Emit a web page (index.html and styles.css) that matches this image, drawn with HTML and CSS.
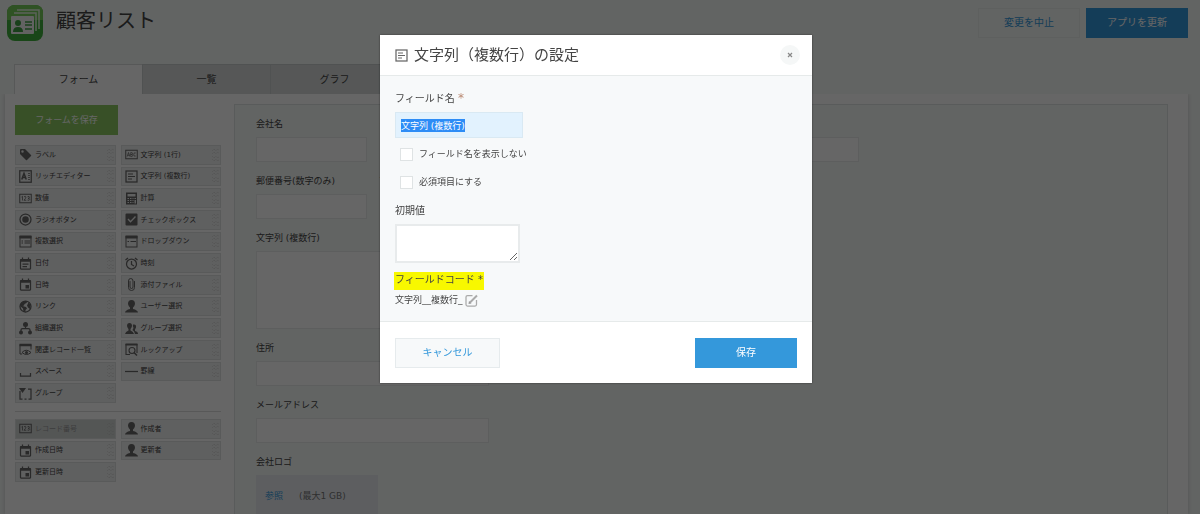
FILE: index.html
```html
<!DOCTYPE html>
<html lang="ja">
<head>
<meta charset="utf-8">
<title>顧客リスト</title>
<link rel="stylesheet" href="styles.css">
</head>
<body>
<svg class="sprite" aria-hidden="true">
  <symbol id="i-tag" viewBox="0 0 26 26"><path fill="currentColor" fill-rule="evenodd" d="M2 4Q2 2 4 2H12L24 14Q25 15 24 16L16 24Q15 25 14 24L2 12ZM7 4.500A2.500 2.500 0 1 0 7 9.500A2.500 2.500 0 1 0 7 4.500Z"/></symbol>
  <symbol id="i-rich" viewBox="0 0 26 26"><g fill="none" stroke="currentColor"><rect x="1.500" y="1.500" width="23" height="23" stroke-width="2.500"/><path stroke-width="3" d="M5.500 19 10 7l4.500 12M7 15h6"/><path stroke-width="1.500" d="M18 7h4M18 11h4M18 15h4M18 19h4"/></g></symbol>
  <symbol id="i-num" viewBox="0 0 26 26"><g fill="none" stroke="currentColor"><rect x="1.500" y="4.500" width="23" height="17" stroke-width="2"/><path stroke-width="1.600" d="M5 10l2-1.500V17M10 9.500q3.500-2 4 .500 0 2-4 6.500h4.500M17 9.500q4-2 4 1 0 2-3 2.200 3.500 0 3.500 2-.500 3-4.500 1.300"/></g></symbol>
  <symbol id="i-abc" viewBox="0 0 26 26"><g fill="none" stroke="currentColor"><rect x="1.500" y="4.500" width="23" height="17" stroke-width="2"/><path stroke-width="1.500" d="M4.500 17 7 9l2.500 8M5.500 14.500h3M11.500 9v8h2q2-.300 2-2.200 0-1.800-2-1.800h-2 1.500q2-.200 2-2T13 9ZM21.500 10q-4-2-4 3t4 3"/></g></symbol>
  <symbol id="i-multi" viewBox="0 0 26 26"><g fill="none" stroke="currentColor"><rect x="2" y="2" width="22" height="22" stroke-width="2.500"/><path stroke-width="2" d="M6 8h10M6 13h14M6 18h8"/></g></symbol>
  <symbol id="i-calc" viewBox="0 0 26 26"><path fill="currentColor" fill-rule="evenodd" d="M2 1H24V25H2ZM5 4V9H21V4ZM5 12V14H8V12ZM10 12V14H13V12ZM15 12V14H17V12ZM19 12V14H22V12ZM5 16V18H8V16ZM10 16V18H13V16ZM15 16V18H17V16ZM19 16V23H22V16ZM5 20V22H8V20ZM10 20V22H13V20ZM15 20V22H17V20Z"/></symbol>
  <symbol id="i-radio" viewBox="0 0 26 26"><circle cx="13" cy="13" r="11" fill="none" stroke="currentColor" stroke-width="2.500"/><circle cx="13" cy="13" r="6.500" fill="currentColor"/></symbol>
  <symbol id="i-check" viewBox="0 0 26 26"><path fill="currentColor" fill-rule="evenodd" d="M3 1H23Q25 1 25 3V23Q25 25 23 25H3Q1 25 1 23V3Q1 1 3 1ZM5 13 11 19.500 22 8 20 6 11 15.500 7 11Z"/></symbol>
  <symbol id="i-list" viewBox="0 0 26 26"><g fill="none" stroke="currentColor" stroke-width="2"><rect x="2" y="3" width="22" height="21"/><path stroke-width="6" d="M1 4h24"/><path d="M5 12h3M11 12h11M5 16h3M11 16h11"/></g></symbol>
  <symbol id="i-drop" viewBox="0 0 26 26"><g fill="none" stroke="currentColor" stroke-width="2"><rect x="2" y="3" width="22" height="21"/><path stroke-width="6" d="M1 4h24"/><path d="M5 13h3M11 13h11"/></g></symbol>
  <symbol id="i-date" viewBox="0 0 26 26"><g fill="none" stroke="currentColor" stroke-width="2.500"><rect x="3" y="5" width="20" height="19" rx="1"/><path stroke-width="5" d="M3 7h20"/><path d="M7 1v5M19 1v5M7 14h12M7 19h9"/></g></symbol>
  <symbol id="i-cal" viewBox="0 0 26 26"><g fill="none" stroke="currentColor" stroke-width="2.500"><rect x="3" y="5" width="20" height="19" rx="1"/><path stroke-width="5" d="M3 7h20"/><path d="M7 1v5M19 1v5"/></g><path fill="currentColor" d="M13 14h7v7h-7z"/></symbol>
  <symbol id="i-clock" viewBox="0 0 26 26"><g fill="none" stroke="currentColor" stroke-width="2.500"><circle cx="13" cy="14" r="10"/><path d="M13 8v7l5 3M1 6l5-4M25 6l-5-4"/></g></symbol>
  <symbol id="i-clip" viewBox="0 0 26 26"><path fill="none" stroke="currentColor" stroke-width="2" stroke-linecap="round" d="M19 7v12q0 6-6 6t-6-6V6q0-5 4.500-5T16 6v12q0 3-3 3t-3-3V7"/></symbol>
  <symbol id="i-link" viewBox="0 0 26 26"><circle cx="13" cy="13" r="11" fill="none" stroke="currentColor" stroke-width="2.500"/><path fill="currentColor" d="M3 8 9 2 17 2 15 6 11 8 10 11 7 12 14 14 16 17 13 20 13 24 9 23 8 17 2 12ZM19 5l4 5-1 8-4-3-2-4Z"/></symbol>
  <symbol id="i-user" viewBox="0 0 26 26"><path fill="currentColor" d="M13 0Q20 0 20 8Q19 13 16 15V18Q25 20 26 25H0Q1 20 10 18V15Q7 13 6 8Q6 0 13 0Z"/></symbol>
  <symbol id="i-org" viewBox="0 0 26 26"><circle cx="13" cy="5" r="5" fill="currentColor"/><circle cx="4" cy="21" r="4" fill="currentColor"/><circle cx="22" cy="21" r="4" fill="currentColor"/><path fill="none" stroke="currentColor" stroke-width="2.500" d="M13 8v5M4 20v-4q0-3 3-3h12q3 0 3 3v4"/></symbol>
  <symbol id="i-group" viewBox="0 0 26 26"><path fill="currentColor" d="M9 2Q14 2 14 8Q13 12 11 14V17Q17 19 18 24H0Q1 19 7 17V14Q5 12 4 8Q4 2 9 2ZM18 5Q23 5 22 11L20 15V18Q26 19 26 24H20Q19 18 15 16L17 12Q15 7 16 5Z"/></symbol>
  <symbol id="i-related" viewBox="0 0 26 26"><g fill="none" stroke="currentColor" stroke-width="2"><path d="M6 22H2V3h22v10"/><path stroke-width="5" d="M1 4h24"/><path d="M6 19q8-9 18 0-9 8-18 0Z"/></g><circle cx="15" cy="19" r="3" fill="currentColor"/></symbol>
  <symbol id="i-lookup" viewBox="0 0 26 26"><g fill="none" stroke="currentColor" stroke-width="2.200"><path d="M10 23H2V3h22v17"/><path stroke-width="4" d="M1 3h24"/><circle cx="14" cy="15" r="6"/><path stroke-width="3" d="m18 19 6 6"/></g></symbol>
  <symbol id="i-space" viewBox="0 0 26 26"><path fill="none" stroke="currentColor" stroke-width="2.500" d="M3 16v6h20v-6"/></symbol>
  <symbol id="i-rule" viewBox="0 0 26 26"><path stroke="currentColor" stroke-width="2.500" d="M0 13h26"/></symbol>
  <symbol id="i-box" viewBox="0 0 26 26"><path fill="none" stroke="currentColor" stroke-width="2.500" d="M2 8v16h5M11 24h4M19 24h5V4h-6"/><path fill="currentColor" d="M0 2h14L7 12z"/></symbol>
  <symbol id="i-grip" viewBox="0 0 14 28"><path fill="none" stroke="currentColor" stroke-width="1.500" stroke-dasharray="2 2" d="m1 5 3-3 3 3M8 5l3-3 3 3M1 11l3-3 3 3M8 11l3-3 3 3M1 17l3 3 3-3M8 17l3 3 3-3M1 23l3 3 3-3M8 23l3 3 3-3"/></symbol>
</svg>

<header class="app-header">
  <svg class="app-icon" viewBox="0 0 38 38" aria-hidden="true">
    <rect x="1" y="1" width="36" height="36" rx="8" fill="#3fae3c"/>
    <path d="M1 16V9q0-8 8-8h20q8 0 8 8v7z" fill="#77cc5a"/>
    <path d="M11 6h22v19M8 9h22v18" fill="none" stroke="#e8f5e4" stroke-width="1.500"/>
    <rect x="5" y="12" width="23" height="18" rx="1" fill="#f5f5f5"/>
    <circle cx="12" cy="19" r="3" fill="#3fa045"/>
    <path d="M7 28q0-5 5-5t5 5z" fill="#3fa045"/>
    <path d="M19 18h7M19 21h7M19 25h7" stroke="#3fa045" stroke-width="1.500"/>
  </svg>
  <h1 class="app-title">顧客リスト</h1>
  <div class="header-actions">
    <button class="button button-plain" type="button">変更を中止</button>
    <button class="button button-primary" type="button">アプリを更新</button>
  </div>
</header>

<nav class="tabs">
  <button class="tab tab-active" type="button">フォーム</button>
  <button class="tab" type="button">一覧</button>
  <button class="tab" type="button">グラフ</button>
</nav>

<main class="panel">
  <aside class="palette">
    <button class="button button-save-form" type="button">フォームを保存</button>
    <div class="parts parts-main">
      <button class="part" type="button"><svg class="icon"><use href="#i-tag"/></svg>ラベル<svg class="grip"><use href="#i-grip"/></svg></button>
      <button class="part" type="button"><svg class="icon"><use href="#i-abc"/></svg>文字列 (1行)<svg class="grip"><use href="#i-grip"/></svg></button>
      <button class="part" type="button"><svg class="icon"><use href="#i-rich"/></svg>リッチエディター<svg class="grip"><use href="#i-grip"/></svg></button>
      <button class="part" type="button"><svg class="icon"><use href="#i-multi"/></svg>文字列 (複数行)<svg class="grip"><use href="#i-grip"/></svg></button>
      <button class="part" type="button"><svg class="icon"><use href="#i-num"/></svg>数値<svg class="grip"><use href="#i-grip"/></svg></button>
      <button class="part" type="button"><svg class="icon"><use href="#i-calc"/></svg>計算<svg class="grip"><use href="#i-grip"/></svg></button>
      <button class="part" type="button"><svg class="icon"><use href="#i-radio"/></svg>ラジオボタン<svg class="grip"><use href="#i-grip"/></svg></button>
      <button class="part" type="button"><svg class="icon"><use href="#i-check"/></svg>チェックボックス<svg class="grip"><use href="#i-grip"/></svg></button>
      <button class="part" type="button"><svg class="icon"><use href="#i-list"/></svg>複数選択<svg class="grip"><use href="#i-grip"/></svg></button>
      <button class="part" type="button"><svg class="icon"><use href="#i-drop"/></svg>ドロップダウン<svg class="grip"><use href="#i-grip"/></svg></button>
      <button class="part" type="button"><svg class="icon"><use href="#i-date"/></svg>日付<svg class="grip"><use href="#i-grip"/></svg></button>
      <button class="part" type="button"><svg class="icon"><use href="#i-clock"/></svg>時刻<svg class="grip"><use href="#i-grip"/></svg></button>
      <button class="part" type="button"><svg class="icon"><use href="#i-cal"/></svg>日時<svg class="grip"><use href="#i-grip"/></svg></button>
      <button class="part" type="button"><svg class="icon"><use href="#i-clip"/></svg>添付ファイル<svg class="grip"><use href="#i-grip"/></svg></button>
      <button class="part" type="button"><svg class="icon"><use href="#i-link"/></svg>リンク<svg class="grip"><use href="#i-grip"/></svg></button>
      <button class="part" type="button"><svg class="icon"><use href="#i-user"/></svg>ユーザー選択<svg class="grip"><use href="#i-grip"/></svg></button>
      <button class="part" type="button"><svg class="icon"><use href="#i-org"/></svg>組織選択<svg class="grip"><use href="#i-grip"/></svg></button>
      <button class="part" type="button"><svg class="icon"><use href="#i-group"/></svg>グループ選択<svg class="grip"><use href="#i-grip"/></svg></button>
      <button class="part" type="button"><svg class="icon"><use href="#i-related"/></svg>関連レコード一覧<svg class="grip"><use href="#i-grip"/></svg></button>
      <button class="part" type="button"><svg class="icon"><use href="#i-lookup"/></svg>ルックアップ<svg class="grip"><use href="#i-grip"/></svg></button>
      <button class="part" type="button"><svg class="icon"><use href="#i-space"/></svg>スペース<svg class="grip"><use href="#i-grip"/></svg></button>
      <button class="part" type="button"><svg class="icon"><use href="#i-rule"/></svg>罫線<svg class="grip"><use href="#i-grip"/></svg></button>
      <button class="part" type="button"><svg class="icon"><use href="#i-box"/></svg>グループ<svg class="grip"><use href="#i-grip"/></svg></button>
    </div>
    <div class="parts parts-system">
      <button class="part part-used" type="button" disabled><svg class="icon"><use href="#i-num"/></svg>レコード番号<svg class="grip"><use href="#i-grip"/></svg></button>
      <button class="part" type="button"><svg class="icon"><use href="#i-user"/></svg>作成者<svg class="grip"><use href="#i-grip"/></svg></button>
      <button class="part" type="button"><svg class="icon"><use href="#i-cal"/></svg>作成日時<svg class="grip"><use href="#i-grip"/></svg></button>
      <button class="part" type="button"><svg class="icon"><use href="#i-user"/></svg>更新者<svg class="grip"><use href="#i-grip"/></svg></button>
      <button class="part" type="button"><svg class="icon"><use href="#i-cal"/></svg>更新日時<svg class="grip"><use href="#i-grip"/></svg></button>
    </div>
  </aside>

  <section class="canvas">
    <div class="field-row">
      <div class="field"><label for="company">会社名</label><input id="company" class="box" type="text"></div>
      <div class="field field-wide"><label for="department">部署名</label><input id="department" class="box" type="text"></div>
      <div class="field field-wide"><label for="person">担当者名</label><input id="person" class="box" type="text"></div>
    </div>
    <div class="field-row">
      <div class="field"><label for="zip">郵便番号(数字のみ)</label><input id="zip" class="box" type="text"></div>
      <div class="field"><label for="tel">TEL</label><input id="tel" class="box" type="text"></div>
    </div>
    <div class="field-row">
      <div class="field field-wide"><label for="memo">文字列 (複数行)</label><textarea id="memo" class="box box-tall"></textarea></div>
    </div>
    <div class="field-row">
      <div class="field field-wide"><label for="address">住所</label><input id="address" class="box" type="text"></div>
    </div>
    <div class="field-row">
      <div class="field field-wide"><label for="mail">メールアドレス</label><input id="mail" class="box" type="text"></div>
    </div>
    <div class="field-row field-row-last">
      <div class="field"><span>会社ロゴ</span><div class="upload"><a href="#logo">参照</a><span class="upload-note">(最大1 GB)</span></div></div>
    </div>
  </section>
</main>

<div class="backdrop">
  <form class="dialog" role="dialog" aria-modal="true" aria-labelledby="dialog-title">
    <header class="dialog-header">
      <svg class="icon"><use href="#i-multi"/></svg>
      <h2 class="dialog-title" id="dialog-title">文字列（複数行）の設定</h2>
      <button class="close" type="button" aria-label="閉じる"><svg class="close-mark" viewBox="0 0 6 6" aria-hidden="true"><path d="m1 1 4 4M5 1 1 5" stroke="#888" stroke-width="1.200"/></svg></button>
    </header>
    <div class="dialog-body">
      <label class="caption" for="field-name">フィールド名 <span class="required">*</span></label>
      <input class="name-input" id="field-name" type="text" value="文字列 (複数行)">
      <label class="option"><input class="tick" type="checkbox">フィールド名を表示しない</label>
      <label class="option"><input class="tick" type="checkbox">必須項目にする</label>
      <label class="caption caption-default" for="default-value">初期値</label>
      <textarea class="default-input" id="default-value"></textarea>
      <div class="code-caption">フィールドコード <span>*</span></div>
      <div class="code-value">文字列__複数行_
        <button class="edit" type="button" aria-label="フィールドコードを編集"><svg class="edit-icon" viewBox="0 0 26 26" aria-hidden="true"><g fill="none" stroke="#aaa" stroke-width="2.500"><path d="M15 3H5Q2 3 2 6v15q0 3 3 3h15q3 0 3-3V12"/><path stroke-width="4" d="M10 17 24 3"/></g><path fill="#999" d="m7 20 1-6 5 5z"/></svg></button>
      </div>
    </div>
    <footer class="dialog-footer">
      <button class="button button-cancel" type="button">キャンセル</button>
      <button class="button button-primary" type="button">保存</button>
    </footer>
  </form>
</div>
<script src="script.js"></script>
</body>
</html>
```
FILE: styles.css
```css
* { box-sizing: border-box; }
body {
  display: flex;
  flex-direction: column;
  margin: 0;
  height: 100vh;
  padding: 0 12px 0 5px;
  overflow: hidden;
  background: #f5f9f7;
  color: #444;
  font: 9px/16px "DejaVu Sans", "Noto Sans CJK JP", sans-serif;
}
button, input, textarea { font: inherit; color: inherit; margin: 0; border-radius: 0; }
.sprite { display: none; }
.icon { flex: none; width: 13px; height: 13px; color: #666; }

.button { height: 30px; border: 0; padding: 0; font-size: 10px; text-align: center; }
.button-plain { width: 102px; background: #f5f9f7; border: 1px solid #ecefee; color: #3498db; }
.button-primary { width: 102px; background: #3498db; border: 1px solid #3498db; color: #fff; }
.button-save-form { width: 103px; background: #8cc963; color: #fff; font-size: 9px; }

.app-header { display: flex; flex: none; height: 64px; align-items: flex-start; padding-left: 1px; }
.app-icon { width: 38px; height: 38px; margin-top: 4px; }
.app-title { margin: 6px 0 0 12px; font-size: 20px; line-height: 30px; font-weight: 400; }
.header-actions { display: flex; gap: 6px; margin: 8px 0 0 auto; }

.tabs { display: flex; flex: none; height: 30px; padding-left: 9px; }
.tab { width: 128px; padding: 0; border: 1px solid #c8cccc; border-width: 1px 0 0 1px; background: #d6dada; font-size: 10px; }
.tab-active { background: #fff; border-color: #d9dddd; }

.panel { display: flex; flex: 1; min-height: 0; background: #fff; box-shadow: 0 0 4px #ccc; clip-path: inset(0 -6px -6px -6px); }
.palette { flex: none; width: 229px; padding: 11px 13px 0 10px; }
.parts { display: grid; grid-template-columns: 1fr 1fr; grid-auto-rows: 1fr; gap: 2px 5px; }
.parts-main { height: 258px; margin-top: 10px; }
.parts-system { height: 71px; margin-top: 8px; padding-top: 7px; border-top: 1px solid #dcdcdc; }
.part {
  display: flex; align-items: center; gap: 3px;
  min-height: 0; padding: 0 1px 0 3px;
  border: 1px solid #dfe1e1; background: #eeefef;
  font-size: 7px; line-height: 10px; white-space: nowrap;
}
.part-used { background: #d2d6d5; color: #999; }
.grip { flex: none; width: 7px; height: 14px; margin-left: auto; color: #bbb; }

.canvas { flex: 1; margin: 10px 20px 0 0; padding: 11px 21px 0; border: 1px solid #dfe3e3; border-bottom: 0; background: #f5f9f7; overflow: hidden; }
.field-row { display: flex; gap: 13px; margin-bottom: 11px; }
.field-row-last { margin-bottom: 0; }
.field { display: flex; flex-direction: column; gap: 5px; width: 111px; white-space: nowrap; }
.field-wide { width: 233px; }
.box { display: block; width: 100%; height: 25px; padding: 4px; border: 1px solid #e8ebec; background: #fff; resize: none; }
.box-tall { height: 78px; }
.upload { display: flex; gap: 16px; width: 122px; padding: 13px 9px 10px; background: #e8ecf1; }
.upload a { color: #3498db; text-decoration: none; }
.upload-note { color: #777; }

.backdrop { position: fixed; inset: 0; display: flex; justify-content: center; align-items: flex-start; padding: 35px 8px 0 0; background: rgba(0, 0, 0, .6); }
.dialog { width: 432px; background: #fff; box-shadow: 0 0 2px rgba(0, 0, 0, .5); }
.dialog-header { display: flex; align-items: center; gap: 6px; height: 41px; padding: 0 12px 0 15px; border-bottom: 1px solid #e6eaea; }
.dialog-title { margin: 0; font-size: 15px; line-height: 24px; font-weight: 400; }
.close { display: grid; place-items: center; width: 20px; height: 20px; margin-left: auto; padding: 0; border: 0; border-radius: 50%; background: #f5f7f7; }
.close-mark { width: 6px; height: 6px; }
.dialog-body { display: flex; flex-direction: column; align-items: flex-start; height: 245px; padding: 14px 15px 0; background: #f7f9fa; }
.caption { font-size: 10px; }
.required { color: #b98a72; font-size: 12px; }
.name-input { width: 128px; height: 26px; margin: 5px 0 2px; padding: 0 5px; border: 1px solid #d9e9f3; background: #e2f2fe; outline: 0; line-height: 14px; }
.name-input::selection { background: #2d8cf6; color: #fff; }
.option { display: flex; align-items: center; gap: 6px; height: 28px; padding-left: 5px; }
.tick { appearance: none; width: 13px; height: 13px; border: 1px solid #dfe3e4; background: #fff; }
.caption-default { margin-top: 7px; }
.default-input { display: block; width: 125px; height: 39px; margin-top: 5px; padding: 4px; border: 2px solid #e8ebec; background: #fff; outline: 0; }
.code-caption { height: 18px; margin: 9px 0 0 -1px; padding: 0 1px; background: #f8f800; font-size: 10px; }
.code-value { display: flex; align-items: center; gap: 2px; height: 20px; }
.edit { width: 13px; height: 13px; padding: 0; border: 0; background: none; }
.edit-icon { display: block; width: 13px; height: 13px; }
.dialog-footer { display: flex; justify-content: space-between; padding: 16px 15px 15px; border-top: 1px solid #e6eaea; }
.button-cancel { width: 105px; background: #f7f9fa; border: 1px solid #e6ebed; color: #3498db; }
```
FILE: script.js
```js
const nameInput = document.getElementById("field-name");
nameInput.focus();
nameInput.select();
```
